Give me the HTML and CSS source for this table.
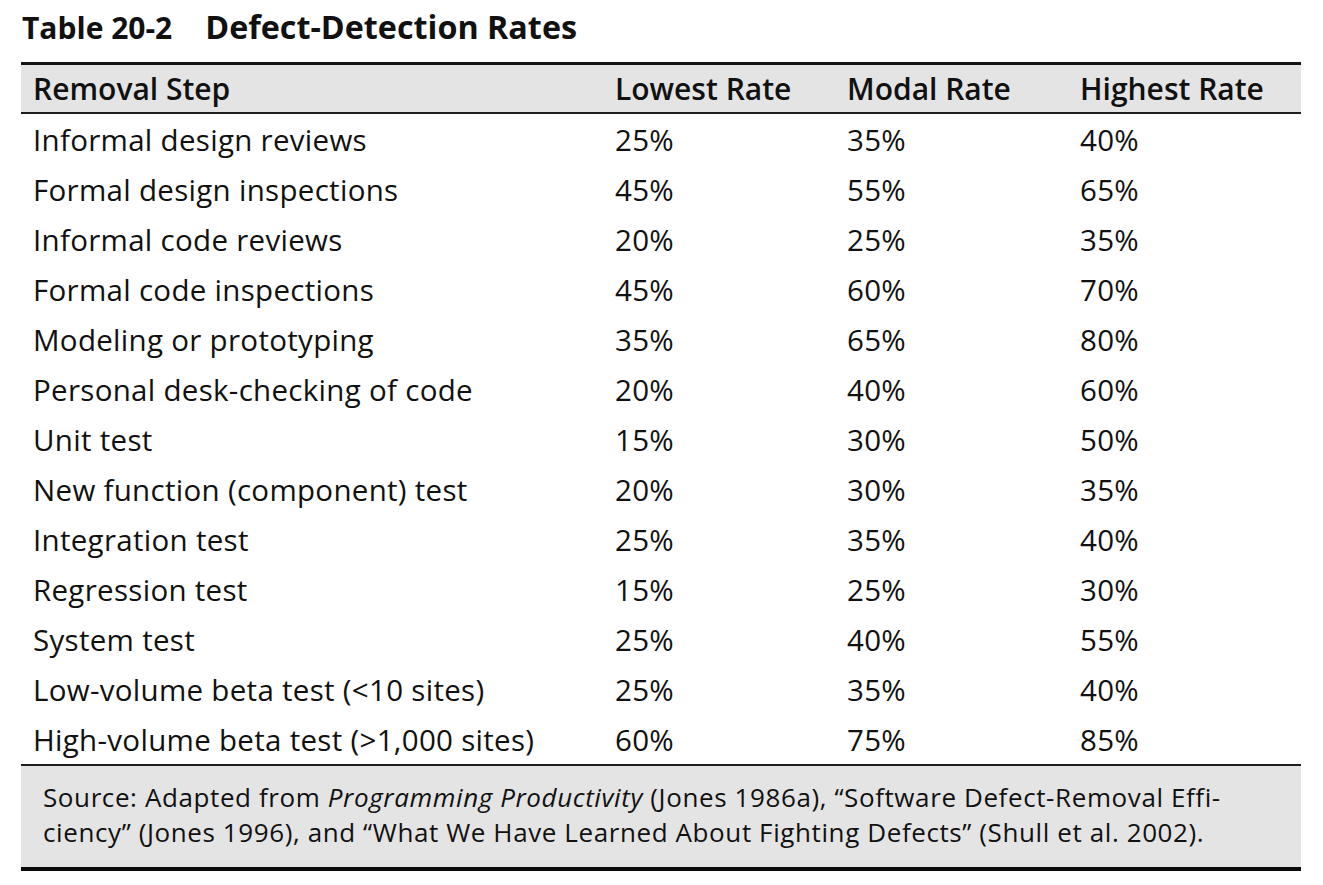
FILE: index.html
```html
<!DOCTYPE html>
<html lang="en">
<head>
<meta charset="utf-8">
<title>Table 20-2 Defect-Detection Rates</title>
<link rel="stylesheet" href="styles.css">
</head>
<body>
<div class="page">
  <div class="caption"><span class="num">Table 20-2</span><span class="name">Defect-Detection Rates</span></div>
  <table class="rates">
    <colgroup>
      <col class="c1"><col class="c2"><col class="c3"><col class="c4">
    </colgroup>
    <thead>
      <tr><th>Removal Step</th><th>Lowest Rate</th><th>Modal Rate</th><th>Highest Rate</th></tr>
    </thead>
    <tbody>
      <tr><td>Informal design reviews</td><td>25%</td><td>35%</td><td>40%</td></tr>
      <tr><td>Formal design inspections</td><td>45%</td><td>55%</td><td>65%</td></tr>
      <tr><td>Informal code reviews</td><td>20%</td><td>25%</td><td>35%</td></tr>
      <tr><td>Formal code inspections</td><td>45%</td><td>60%</td><td>70%</td></tr>
      <tr><td>Modeling or prototyping</td><td>35%</td><td>65%</td><td>80%</td></tr>
      <tr><td>Personal desk-checking of code</td><td>20%</td><td>40%</td><td>60%</td></tr>
      <tr><td>Unit test</td><td>15%</td><td>30%</td><td>50%</td></tr>
      <tr><td>New function (component) test</td><td>20%</td><td>30%</td><td>35%</td></tr>
      <tr><td>Integration test</td><td>25%</td><td>35%</td><td>40%</td></tr>
      <tr><td>Regression test</td><td>15%</td><td>25%</td><td>30%</td></tr>
      <tr><td>System test</td><td>25%</td><td>40%</td><td>55%</td></tr>
      <tr><td>Low-volume beta test (&lt;10 sites)</td><td>25%</td><td>35%</td><td>40%</td></tr>
      <tr><td>High-volume beta test (&gt;1,000 sites)</td><td>60%</td><td>75%</td><td>85%</td></tr>
    </tbody>
    <tfoot>
      <tr><td colspan="4" class="source">Source: Adapted from <i>Programming Productivity</i> (Jones 1986a), “Software Defect-Removal Effi-<br>ciency” (Jones 1996), and “What We Have Learned About Fighting Defects” (Shull et al. 2002).</td></tr>
    </tfoot>
  </table>
</div>
</body>
</html>
```

FILE: styles.css
```css
html, body {
  margin: 0;
  background: #ffffff;
}

body {
  font-family: "Open Sans", "Noto Sans", "DejaVu Sans", sans-serif;
  color: #111111;
}

.page {
  padding-left: 21px;
  width: 1280px;
}

.caption {
  height: 62px;
  box-sizing: border-box;
  padding-top: 4px;
  padding-left: 1px;
  display: flex;
  align-items: baseline;
  font-weight: 700;
  line-height: 45px;
}

.caption .num {
  font-size: 30px;
  margin-right: 33px;
}

.caption .name {
  font-size: 32.3px;
}

.rates {
  width: 1280px;
  table-layout: fixed;
  border-collapse: collapse;
  border-top: 3px solid #151515;
}

.rates .c1 { width: 582px; }
.rates .c2 { width: 232px; }
.rates .c3 { width: 233px; }
.rates .c4 { width: 233px; }

.rates th,
.rates td {
  padding: 0 0 0 12px;
  text-align: left;
  white-space: nowrap;
}

.rates thead th {
  background: #e4e4e4;
  height: 47px;
  font-size: 30px;
  font-weight: 600;
  border-bottom: 2px solid #1e1e1e;
}

.rates tbody td {
  height: 50px;
  font-size: 29.5px;
  letter-spacing: 0.3px;
  font-weight: 400;
}

.rates tfoot td.source {
  background: #e4e4e4;
  border-top: 2px solid #1e1e1e;
  border-bottom: 4px solid #0a0a0a;
  height: 97px;
  padding: 0 0 4px 22px;
  font-size: 26px;
  letter-spacing: 0.6px;
  line-height: 35px;
  white-space: nowrap;
}
```
